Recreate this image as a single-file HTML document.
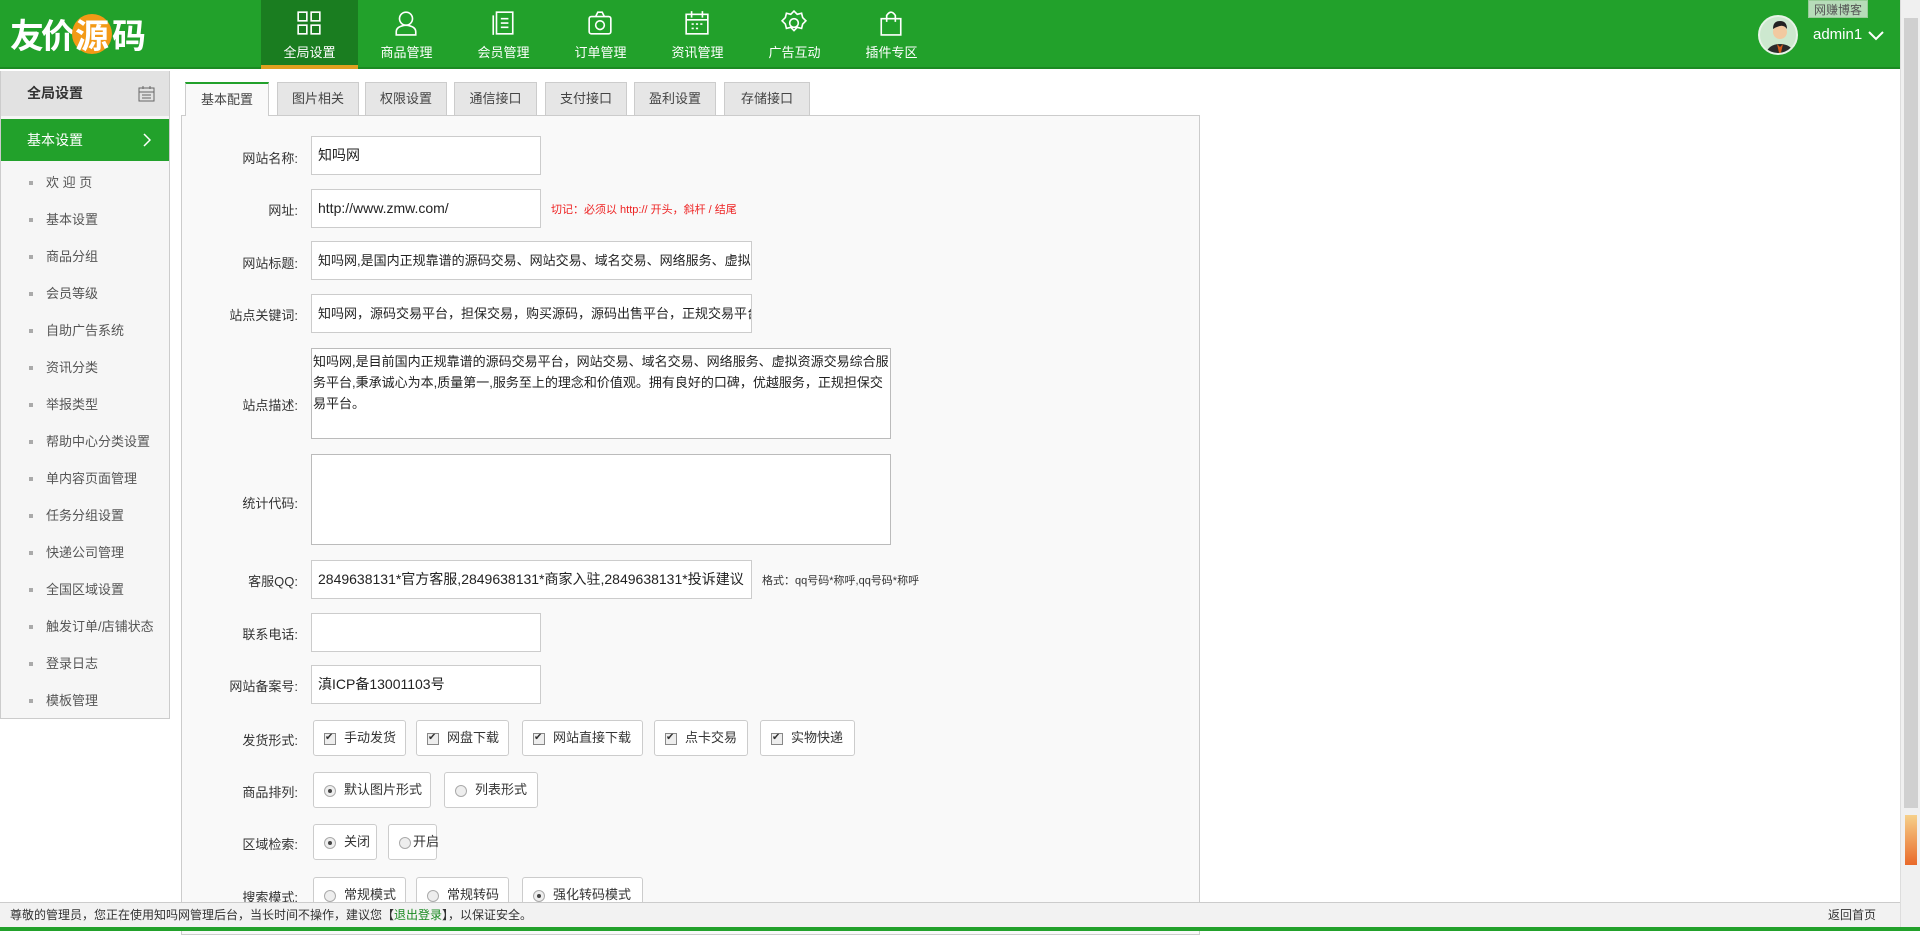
<!DOCTYPE html>
<html><head><meta charset="utf-8"><style>
*{margin:0;padding:0;box-sizing:border-box}
body{width:1920px;height:931px;overflow:hidden;background:#fff;font-family:"Liberation Sans","Noto Sans CJK SC",sans-serif;font-size:13px;color:#333;position:relative}
.hd{position:absolute;left:0;top:0;width:1900px;height:69px;background:#22a12b;border-bottom:2px solid #1b8a22}
.logo{position:absolute;left:10px;top:14px;color:#fff;font-size:34px;font-weight:bold;letter-spacing:-3px;font-family:"Noto Sans CJK SC",sans-serif;line-height:40px;white-space:nowrap}
.logo i{display:inline-block;width:40px;height:40px;border-radius:50%;background:#f39a16;font-style:normal;text-align:center;line-height:40px;vertical-align:top;letter-spacing:0}
.nav{position:absolute;left:261px;top:0;height:69px}
.nav a{position:absolute;top:0;width:97px;height:69px;color:#fff;text-align:center;font-size:13px}
.nav a.on{background:#1a7d20;border-bottom:4px solid #e0a020}
.nav a svg{position:absolute;left:35px;top:10px}
.nav a span{position:absolute;left:0;right:0;top:42px}
.user{position:absolute;left:1758px;top:15px;width:40px;height:40px;border-radius:50%;background:#cde8cf;border:2px solid #e8f3e8;overflow:hidden}
.tip{position:absolute;left:1808px;top:0;width:60px;height:18px;background:#b7dcb9;color:#555;font-size:12px;text-align:center;line-height:18px;border:1px solid #9c9}
.sb{position:absolute;right:0;top:0;width:20px;height:931px;background:#f0f0f0;border-left:1px solid #ddd}
.side{position:absolute;left:0;top:71px;width:170px;height:648px;background:#f6f6f6;border:1px solid #ccc;border-top:0}
.side .t{position:relative;height:45px;background:#e2e2e2;font-size:14px;font-weight:bold;line-height:45px;padding-left:26px;color:#333}
.side .g{position:relative;height:42px;background:#22a12b;color:#fff;font-size:14px;line-height:42px;padding-left:26px;margin-top:3px}
.side li{list-style:none;height:37px;line-height:37px;padding-left:45px;font-size:13px;color:#555;position:relative}
.side li:before{content:"";position:absolute;left:28px;top:17px;width:4px;height:4px;background:#aaa}
.tabs div{position:absolute;top:82px;height:33px;background:#e6e6e6;border:1px solid #ccc;border-bottom:0;text-align:center;line-height:32px;font-size:13px;color:#444}
.tabs div.on{background:#f9f9f9;border-top:2px solid #22a12b;height:34px;z-index:2}
.panel{position:absolute;left:181px;top:115px;width:1019px;height:820px;background:#f9f9f9;border:1px solid #ccc}
.lb{position:absolute;width:120px;left:178px;text-align:right;font-size:13px;color:#333}
.ip{position:absolute;left:311px;height:39px;background:#fff;border:1px solid #ccc;font-size:14px;line-height:37px;padding-left:6px;white-space:nowrap;overflow:hidden;color:#222}
.ta{position:absolute;left:311px;width:580px;background:#fff;border:1px solid #bbb;font-size:13px;line-height:21px;padding:2px 1px;color:#222}
.op{position:absolute;height:36px;background:#fff;border:1px solid #ccc;border-radius:3px;font-size:13px;line-height:34px;padding-left:30px;color:#333;white-space:nowrap}
.op:before{content:"";position:absolute;left:10px;top:12px;width:10px;height:10px;border:1px solid #888;background:#eee}
.op.c:after{content:"✔";position:absolute;left:11px;top:0;font-size:10px;color:#333}
.op.r:before{border-radius:50%;border-color:#aaa}
.op.r.s:after{content:"";position:absolute;left:14px;top:16px;width:4px;height:4px;border-radius:50%;background:#444}
.ft{position:absolute;left:0;top:902px;width:1900px;height:25px;background:#f2f2f2;border-top:1px solid #ccc;font-size:12px;line-height:24px;padding-left:10px;color:#333}
.fl{position:absolute;left:0;top:927px;width:1920px;height:4px;background:#22a12b}
</style></head><body>
<div class="hd">
<div class="logo">友价<i>源</i>码</div>
<div class="nav">
<a class="on" style="left:0"><svg width="26" height="26" viewBox="0 0 24 24" fill="none" stroke="#fff" stroke-width="1.5"><rect x="2" y="2" width="8" height="8"/><rect x="14" y="2" width="8" height="8"/><rect x="2" y="14" width="8" height="8"/><rect x="14" y="14" width="8" height="8"/></svg><span>全局设置</span></a>
<a style="left:97px"><svg width="26" height="26" viewBox="0 0 24 24" fill="none" stroke="#fff" stroke-width="1.5"><circle cx="12" cy="8" r="6"/><path d="M3 23v-3q0-5 9-6 9 1 9 6v3z"/></svg><span>商品管理</span></a>
<a style="left:194px"><svg width="26" height="26" viewBox="0 0 24 24" fill="none" stroke="#fff" stroke-width="1.5"><rect x="6" y="2" width="15" height="20"/><path d="M3 5v18M10 8h7M10 12h7M10 16h7"/></svg><span>会员管理</span></a>
<a style="left:291px"><svg width="26" height="26" viewBox="0 0 24 24" fill="none" stroke="#fff" stroke-width="1.5"><rect x="2" y="6" width="20" height="16" rx="2"/><path d="M8 6l2-4h4l2 4"/><circle cx="12" cy="14" r="4"/></svg><span>订单管理</span></a>
<a style="left:388px"><svg width="26" height="26" viewBox="0 0 24 24" fill="none" stroke="#fff" stroke-width="1.5"><rect x="2" y="4" width="20" height="18"/><path d="M2 9h20M7 1v6M17 1v6M7 13h2M11 13h2M15 13h2M7 17h2M11 17h2"/></svg><span>资讯管理</span></a>
<a style="left:485px"><svg width="26" height="26" viewBox="0 0 24 24" fill="none" stroke="#fff" stroke-width="1.5"><circle cx="12" cy="12" r="4"/><path d="M12 1l3 3 4-1 1 4 3 3-3 3-1 4-4-1-3 3-3-3-4 1-1-4-3-3 3-3 1-4 4 1z"/></svg><span>广告互动</span></a>
<a style="left:582px"><svg width="26" height="26" viewBox="0 0 24 24" fill="none" stroke="#fff" stroke-width="1.5"><path d="M3 8h18v15H3zM8 11V5q4-6 8 0v6"/></svg><span>插件专区</span></a>
</div>
<div class="user"><svg width="40" height="40" viewBox="0 0 40 40"><circle cx="20" cy="15" r="7" fill="#f2c9a0"/><path d="M13 12q0-8 7-8t7 8q-3-4-7-3t-7 3z" fill="#222"/><path d="M5 40q2-13 15-13t15 13z" fill="#2b2b2b"/><path d="M17 27l3 3 3-3-3 13z" fill="#d65a1c"/></svg></div>
<div style="position:absolute;left:1813px;top:26px;color:#fff;font-size:15px">admin1</div>
<svg style="position:absolute;left:1868px;top:31px" width="16" height="10" viewBox="0 0 16 10"><path d="M1 1l7 7 7-7" fill="none" stroke="#fff" stroke-width="2"/></svg>
</div>
<div class="tip">网赚博客</div>
<div class="sb"><div style="position:absolute;left:3px;top:18px;width:14px;height:790px;background:#d0d0d0"></div><div style="position:absolute;left:4px;top:815px;width:12px;height:50px;background:linear-gradient(#f6d08a,#e96a2a)"></div></div>
<div class="side">
<div class="t">全局设置<svg style="position:absolute;left:137px;top:14px" width="17" height="17" viewBox="0 0 17 17" fill="none" stroke="#666"><rect x="1" y="3" width="15" height="13"/><path d="M1 7h15M5 1v3M12 1v3M4 10h9M4 13h9"/></svg></div>
<div class="g">基本设置<svg style="position:absolute;left:142px;top:14px" width="8" height="14" viewBox="0 0 8 14"><path d="M1 1l6 6-6 6" fill="none" stroke="#fff" stroke-width="1.5"/></svg></div>
<ul style="margin-top:3px">
<li>欢 迎 页</li><li>基本设置</li><li>商品分组</li><li>会员等级</li><li>自助广告系统</li><li>资讯分类</li><li>举报类型</li><li>帮助中心分类设置</li><li>单内容页面管理</li><li>任务分组设置</li><li>快递公司管理</li><li>全国区域设置</li><li>触发订单/店铺状态</li><li>登录日志</li><li>模板管理</li>
</ul>
</div>
<div class="panel"></div>
<div class="tabs">
<div class="on" style="left:185px;width:84px">基本配置</div>
<div style="left:277px;width:82px">图片相关</div>
<div style="left:365px;width:82px">权限设置</div>
<div style="left:454px;width:83px">通信接口</div>
<div style="left:545px;width:82px">支付接口</div>
<div style="left:634px;width:82px">盈利设置</div>
<div style="left:724px;width:86px">存储接口</div>
</div>
<div class="lb" style="top:148px">网站名称:</div><div class="ip" style="top:136px;width:230px">知吗网</div>
<div class="lb" style="top:200px">网址:</div><div class="ip" style="top:189px;width:230px">http://www.zmw.com/</div>
<div style="position:absolute;left:551px;top:201px;color:#e22;font-size:11px">切记：必须以 http:// 开头，斜杆 / 结尾</div>
<div class="lb" style="top:253px">网站标题:</div><div class="ip" style="top:241px;width:441px;font-size:13px">知吗网,是国内正规靠谱的源码交易、网站交易、域名交易、网络服务、虚拟资源</div>
<div class="lb" style="top:305px">站点关键词:</div><div class="ip" style="top:294px;width:441px;font-size:13px">知吗网，源码交易平台，担保交易，购买源码，源码出售平台，正规交易平台</div>
<div class="lb" style="top:395px">站点描述:</div><div class="ta" style="top:348px;height:91px">知吗网,是目前国内正规靠谱的源码交易平台，网站交易、域名交易、网络服务、虚拟资源交易综合服务平台,秉承诚心为本,质量第一,服务至上的理念和价值观。拥有良好的口碑，优越服务，正规担保交易平台。</div>
<div class="lb" style="top:493px">统计代码:</div><div class="ta" style="top:454px;height:91px"></div>
<div class="lb" style="top:571px">客服QQ:</div><div class="ip" style="top:560px;width:441px">2849638131*官方客服,2849638131*商家入驻,2849638131*投诉建议</div>
<div style="position:absolute;left:762px;top:572px;color:#333;font-size:11px">格式：qq号码*称呼,qq号码*称呼</div>
<div class="lb" style="top:624px">联系电话:</div><div class="ip" style="top:613px;width:230px"></div>
<div class="lb" style="top:676px">网站备案号:</div><div class="ip" style="top:665px;width:230px">滇ICP备13001103号</div>
<div class="lb" style="top:730px">发货形式:</div>
<div class="op c" style="left:313px;top:720px;width:93px">手动发货</div>
<div class="op c" style="left:416px;top:720px;width:93px">网盘下载</div>
<div class="op c" style="left:522px;top:720px;width:121px">网站直接下载</div>
<div class="op c" style="left:654px;top:720px;width:94px">点卡交易</div>
<div class="op c" style="left:760px;top:720px;width:95px">实物快递</div>
<div class="lb" style="top:782px">商品排列:</div>
<div class="op r s" style="left:313px;top:772px;width:118px">默认图片形式</div>
<div class="op r" style="left:444px;top:772px;width:94px">列表形式</div>
<div class="lb" style="top:834px">区域检索:</div>
<div class="op r s" style="left:313px;top:824px;width:64px">关闭</div>
<div class="op r" style="left:388px;top:824px;width:49px;padding-left:24px">开启</div>
<div class="lb" style="top:887px">搜索模式:</div>
<div class="op r" style="left:313px;top:877px;width:93px">常规模式</div>
<div class="op r" style="left:416px;top:877px;width:93px">常规转码</div>
<div class="op r s" style="left:522px;top:877px;width:121px">强化转码模式</div>
<div class="ft">尊敬的管理员，您正在使用知吗网管理后台，当长时间不操作，建议您【<span style="color:#1a8a22">退出登录</span>】，以保证安全。<span style="position:absolute;right:24px;top:0">返回首页</span></div>
<div class="fl"></div>
</body></html>
